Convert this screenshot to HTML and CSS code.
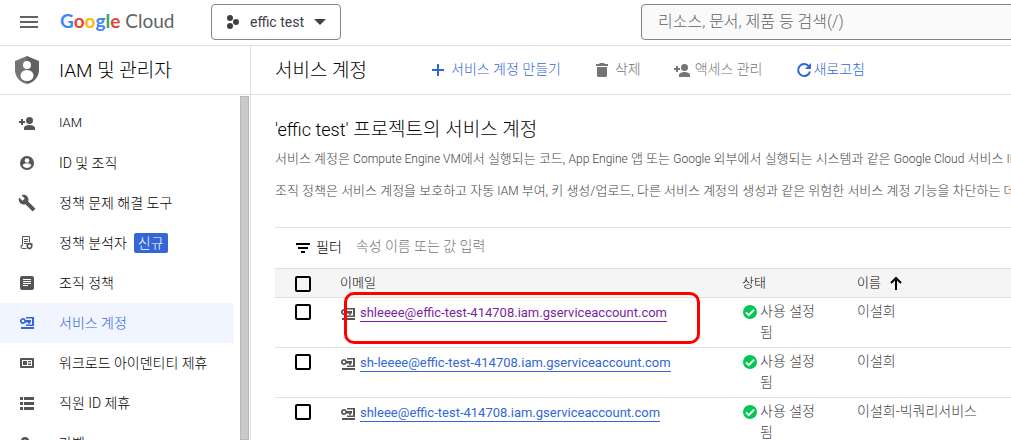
FILE: index.html
```html
<!DOCTYPE html>
<html lang="ko">
<head>
  <meta charset="UTF-8">
  <meta name="viewport" content="width=device-width, initial-scale=1.0">
  <title>서비스 계정</title>
  <link rel="stylesheet" href="styles.css">
</head>
<body>
  <!-- Shared icons -->
  <svg class="sprite" aria-hidden="true">
    <symbol id="person-add" viewBox="0 0 18 18">
      <path d="M3 5h2v2h2v2H5v2H3V9H1V7h2zM6 16v-2c0-2 3-3 5.500-3s5.500 1 5.500 3v2z"/>
      <circle cx="11.500" cy="6.500" r="3.500"/>
    </symbol>
    <symbol id="key-card" viewBox="0 0 14 12">
      <path fill-rule="evenodd" d="M3 1a3 3 0 0 1 2.800 2H11v2.500H9.800V7H8.200V5.500H5.600A3 3 0 1 1 3 1zm0 1.700a1.300 1.300 0 1 0 0 2.600 1.300 1.300 0 0 0 0-2.600z"/>
      <path d="M6 0h8v9H6V7.400h6V1.600H6zM1 10h13v2H1z"/>
    </symbol>
    <symbol id="check" viewBox="0 0 14 14">
      <circle cx="7" cy="7" r="7" fill="#00c853"/>
      <path d="M3 7.400l2.700 2.700L11 4.700" fill="none" stroke="#fff" stroke-width="2"/>
    </symbol>
  </svg>

  <header class="topbar">
    <button class="icon-button" aria-label="탐색 메뉴">
      <svg width="24" height="24" viewBox="0 0 24 24"><path d="M3 6h18v2H3zm0 5h18v2H3zm0 5h18v2H3z"/></svg>
    </button>
    <a class="logo" href="#"><span class="google"><span class="blue">G</span><span class="red">o</span><span class="yellow">o</span><span class="blue">g</span><span class="green">l</span><span class="red">e</span></span> <span>Cloud</span></a>
    <button class="project">
      <svg width="14" height="16" viewBox="0 0 14 16"><circle cx="4" cy="4" r="3"/><circle cx="10" cy="8" r="3"/><circle cx="4" cy="12" r="3"/></svg>
      <span>effic test</span>
      <svg width="12" height="6" viewBox="0 0 12 6"><path d="M0 0h12L6 6z"/></svg>
    </button>
    <input class="search" type="text" aria-label="검색" placeholder="리소스, 문서, 제품 등 검색(/)">
  </header>

  <div class="layout">
    <aside class="sidebar">
      <div class="product">
        <svg width="24" height="28" viewBox="0 0 24 28">
          <path fill="#757575" d="M12 0L0 5v9c0 7 5 12.500 12 14z"/>
          <path fill="#616161" d="M12 0l12 5v9c0 7-5 12.500-12 14z"/>
          <circle cx="12" cy="9" r="4" fill="#fff"/>
          <ellipse cx="12" cy="19.500" rx="6.500" ry="5.500" fill="#fff"/>
        </svg>
        <h2>IAM 및 관리자</h2>
      </div>
      <div class="menu">
        <nav>
          <a href="#" class="latin"><svg width="18" height="18"><use href="#person-add"/></svg>IAM</a>
          <a href="#"><svg width="18" height="18" viewBox="0 0 18 18"><circle cx="9" cy="9" r="7"/><circle cx="9" cy="6.500" r="2.300" fill="#fff"/><path fill="#fff" d="M4.700 11.500c0-1.300 2.300-2.200 4.300-2.200s4.300.9 4.300 2.200C12.500 13 11 14 9 14s-3.500-1-4.300-2.500z"/></svg>ID 및 조직</a>
          <a href="#"><svg width="18" height="18" viewBox="0 0 24 24"><path d="M22.700 19l-9.100-9.100c.9-2.300.4-5-1.500-6.900-2-2-5-2.400-7.400-1.300L9 6 6 9 1.600 4.700C.4 7.100.9 10.100 2.900 12.100c1.900 1.900 4.600 2.400 6.900 1.500l9.100 9.100c.4.400 1 .4 1.400 0l2.300-2.300c.5-.4.5-1.100.1-1.400z"/></svg>정책 문제 해결 도구</a>
          <a href="#"><svg width="18" height="18" viewBox="0 0 18 18"><path fill="none" stroke="#555" d="M8.500 14.500H4.500a1.500 1.500 0 0 1-1.500-1.500v-1.500h1.500V2.500h7V8M6 5.500h4M6 7.500h4M6 9.500h3"/><path d="M11.500 8.500l3 1v3c0 1.500-1.300 2.500-3 3-1.700-.5-3-1.500-3-3v-3z"/><circle cx="11.500" cy="12" r="1.500" fill="#fff"/></svg>정책 분석자<span class="badge">신규</span></a>
          <a href="#"><svg width="18" height="18" viewBox="0 0 18 18"><rect x="2" y="2" width="14" height="14" rx="2"/><path stroke="#fff" d="M5 5.500h8M5 7.500h8M5 9.500h8M5 11.500h5"/></svg>조직 정책</a>
          <a href="#" class="active"><svg width="18" height="14" viewBox="-2 -1 18 14"><use href="#key-card" width="14" height="12"/></svg>서비스 계정</a>
          <a href="#"><svg width="18" height="18" viewBox="0 0 18 18"><rect x="2" y="4" width="14" height="10" rx="1"/><path fill="#fff" d="M4 6h10v6H4z"/><path d="M5 7h4v4H5zM10 7h3v1.300h-3zm0 2.500h3V11h-3z"/></svg>워크로드 아이덴티티 제휴</a>
          <a href="#"><svg width="18" height="18" viewBox="0 0 18 18"><path d="M2 3h3v3H2zm4 0h10v3H6zM2 8h3v3H2zm4 0h10v3H6zm-4 5h3v3H2zm4 0h10v3H6z"/></svg>직원 ID 제휴</a>
          <a href="#"><svg width="18" height="18" viewBox="0 0 18 18"><path d="M3 7a4 4 0 0 1 8 0l5 4-5 5-8-5z"/><circle cx="7" cy="7" r="1.500" fill="#fff"/></svg>라벨</a>
        </nav>
        <div class="scrollbar"></div>
      </div>
    </aside>

    <main>
      <div class="toolbar">
        <h1>서비스 계정</h1>
        <button class="create"><svg width="12" height="12" viewBox="0 0 12 12"><path d="M5 0h2v5h5v2H7v5H5V7H0V5h5z"/></svg>서비스 계정 만들기</button>
        <button class="delete" disabled><svg width="12" height="14" viewBox="0 0 12 14"><path d="M4 0h4l1 1h3v2H0V1h3zM1 4h10v8.500c0 .8-.7 1.500-1.500 1.500h-7C1.700 14 1 13.300 1 12.500z"/></svg>삭제</button>
        <button class="access" disabled><svg width="18" height="18"><use href="#person-add"/></svg>액세스 관리</button>
        <button class="refresh"><svg width="16" height="16" viewBox="0 0 16 16"><path fill="none" stroke="#3367d6" stroke-width="2" d="M13 4.500A6 6 0 1 0 14 9.500"/><path d="M15 1v6H9z"/></svg>새로고침</button>
      </div>

      <section class="content">
        <h2><span>'effic test'</span> 프로젝트의 서비스 계정</h2>
        <p>서비스 계정은 <span>Compute Engine VM</span>에서 실행되는 코드, <span>App Engine</span> 앱 또는 <span>Google</span> 외부에서 실행되는 시스템과 같은 <span>Google Cloud</span> 서비스 <span>ID</span>를 나타냅니다.</p>
        <p>조직 정책은 서비스 계정을 보호하고 자동 <span>IAM</span> 부여, 키 생성/업로드, 다른 서비스 계정의 생성과 같은 위험한 서비스 계정 기능을 차단하는 데 사용할 수 있습니다.</p>

        <div class="filter">
          <svg width="14" height="10" viewBox="0 0 14 10"><path d="M0 0h14v2H0zm2 4h10v2H2zm3 4h4v2H5z"/></svg>
          <label for="filter">필터</label>
          <input id="filter" type="text" placeholder="속성 이름 또는 값 입력">
        </div>

        <table>
          <thead>
            <tr>
              <th class="select"><input type="checkbox" aria-label="모두 선택"></th>
              <th class="email">이메일</th>
              <th class="status">상태</th>
              <th>이름 <svg width="12" height="14" viewBox="0 0 12 14"><path fill="none" stroke="#000" stroke-width="2" d="M6 14V2M1 7l5-5 5 5"/></svg></th>
            </tr>
          </thead>
          <tbody>
            <tr>
              <td class="select"><input type="checkbox" aria-label="shleeee 선택"></td>
              <td class="email"><div class="account"><svg width="14" height="12"><use href="#key-card"/></svg><a class="visited" href="#">shleeee@effic-test-414708.iam.gserviceaccount.com</a></div><div class="highlight"></div></td>
              <td class="status"><div class="state"><svg width="14" height="14"><use href="#check"/></svg><span>사용 설정됨</span></div></td>
              <td>이설희</td>
            </tr>
            <tr>
              <td class="select"><input type="checkbox" aria-label="sh-leeee 선택"></td>
              <td class="email"><div class="account"><svg width="14" height="12"><use href="#key-card"/></svg><a href="#">sh-leeee@effic-test-414708.iam.gserviceaccount.com</a></div></td>
              <td class="status"><div class="state"><svg width="14" height="14"><use href="#check"/></svg><span>사용 설정됨</span></div></td>
              <td>이설희</td>
            </tr>
            <tr>
              <td class="select"><input type="checkbox" aria-label="shleee 선택"></td>
              <td class="email"><div class="account"><svg width="14" height="12"><use href="#key-card"/></svg><a href="#">shleee@effic-test-414708.iam.gserviceaccount.com</a></div></td>
              <td class="status"><div class="state"><svg width="14" height="14"><use href="#check"/></svg><span>사용 설정됨</span></div></td>
              <td>이설희-빅쿼리서비스</td>
            </tr>
          </tbody>
        </table>
      </section>
    </main>
  </div>
</body>
</html>
```
FILE: styles.css
```css
* {
  box-sizing: border-box;
}
body {
  display: flex;
  flex-direction: column;
  height: 100vh;
  margin: 0;
  overflow: hidden;
  background: #fff;
  color: #000;
  font-family: Roboto, "Noto Sans CJK KR", sans-serif;
  font-size: 14px;
  font-weight: 400;
}
h1, h2 {
  margin: 0;
  font-size: 19px;
  font-weight: 300;
  white-space: nowrap;
}
p {
  margin: 0;
}
svg {
  flex: none;
  fill: currentColor;
}
button {
  padding: 0;
  border: none;
  background: none;
  color: inherit;
  font: inherit;
  cursor: pointer;
}
.sprite {
  display: none;
}

/* Top bar */
.topbar {
  display: flex;
  flex: none;
  align-items: center;
  height: 46px;
  padding-left: 17px;
  padding-bottom: 2px;
  border-bottom: 1px solid #e0e0e0;
}
.icon-button {
  display: flex;
  margin-right: 19px;
  color: #5f6368;
}
.logo {
  width: 151px;
  padding-bottom: 2px;
  color: #5f6368;
  font-family: Lato, sans-serif;
  font-size: 19px;
  text-decoration: none;
  white-space: nowrap;
}
.google {
  font-weight: 700;
}
.blue { color: #4285f4; }
.red { color: #ea4335; }
.yellow { color: #fbbc04; }
.green { color: #34a853; }
.project {
  display: flex;
  flex: none;
  align-items: center;
  gap: 10px;
  width: 130px;
  height: 36px;
  padding-left: 14px;
  border: 1px solid #80868b;
  border-radius: 4px;
  color: #3c4043;
}
.search {
  flex: 1;
  height: 36px;
  margin-left: 300px;
  margin-right: -8px;
  padding: 0 16px;
  border: 1px solid #80868b;
  border-radius: 4px;
  background: #fafafa;
  font: inherit;
  font-size: 16px;
  font-weight: 300;
}
.search::placeholder {
  color: #5f6368;
}

.layout {
  display: flex;
  flex: 1;
  min-height: 0;
}

/* Sidebar */
.sidebar {
  display: flex;
  flex: none;
  flex-direction: column;
  width: 251px;
  border-right: 1px solid #e0e0e0;
}
.product {
  display: flex;
  flex: none;
  align-items: center;
  gap: 20px;
  height: 49px;
  padding-left: 15px;
  border-bottom: 1px solid #e0e0e0;
}
.product h2 {
  padding-bottom: 4px;
}
.menu {
  display: flex;
  flex: 1;
  justify-content: space-between;
  min-height: 0;
}
nav {
  width: 234px;
  padding-top: 8px;
}
nav a {
  display: flex;
  align-items: center;
  height: 40px;
  padding-bottom: 2px;
  padding-left: 18px;
  color: #000;
  font-weight: 300;
  text-decoration: none;
  white-space: nowrap;
}
nav svg {
  margin-top: 2px;
  margin-right: 23px;
  color: #555;
}
nav .latin {
  font-size: 13px;
}
nav .active {
  background: #f0f5ff;
  color: #3367d6;
}
nav .active svg {
  color: #3367d6;
}
.badge {
  margin-top: 2px;
  margin-left: 7px;
  padding: 0 4px;
  border-radius: 2px;
  background: #3367d6;
  color: #fff;
  line-height: 20px;
}
.scrollbar {
  width: 9px;
  margin: 1px 1px 0 0;
  border: 1px solid #b8b8b8;
  background: #cacaca;
}

/* Main */
main {
  flex: 1;
  min-width: 0;
  overflow: hidden;
}
.toolbar {
  display: flex;
  align-items: center;
  height: 49px;
  padding-bottom: 4px;
  padding-left: 24px;
  border-bottom: 1px solid #e0e0e0;
  color: #3367d6;
}
.toolbar h1 {
  color: #000;
}
.toolbar button {
  display: flex;
  align-items: center;
  gap: 7px;
  font-weight: 300;
  white-space: nowrap;
}
.toolbar svg {
  margin-top: 4px;
}
.toolbar button:disabled {
  color: #757575;
}
.toolbar .create {
  margin-left: 65px;
}
.toolbar .delete {
  margin-left: 35px;
}
.toolbar .access {
  gap: 4px;
  margin-left: 32px;
}
.toolbar .refresh {
  gap: 1px;
  margin-left: 34px;
}
.content {
  padding: 22px 0 0 24px;
}
.content h2 {
  line-height: 26px;
}
.content h2 span {
  font-size: 18px;
}
.content p {
  color: #444;
  font-size: 13px;
  font-weight: 300;
  line-height: 32px;
  white-space: nowrap;
}
.content p span {
  font-size: 12px;
}
.filter {
  display: flex;
  align-items: center;
  height: 41px;
  margin-top: 20px;
  padding-bottom: 4px;
  padding-left: 21px;
  border-top: 1px solid #e0e0e0;
}
.filter svg {
  margin-top: 4px;
}
.filter label {
  margin-left: 6px;
  font-weight: 300;
}
.filter input {
  flex: 1;
  margin-left: 12px;
  padding: 0 2px;
  border: none;
  font: inherit;
  font-weight: 300;
}
.filter input::placeholder {
  color: #757575;
}

/* Accounts table */
table {
  width: 100%;
  border-collapse: separate;
  border-spacing: 0;
  table-layout: fixed;
  line-height: 21px;
}
th {
  height: 30px;
  padding: 0 0 2px;
  border-top: 1px solid #e0e0e0;
  border-bottom: 1px solid #e0e0e0;
  background: #f5f5f5;
  font-size: 13px;
  font-weight: 300;
  text-align: left;
}
th svg {
  margin-left: 6px;
  vertical-align: middle;
}
td {
  height: 50px;
  padding: 3px 0;
  border-bottom: 1px solid #e0e0e0;
  color: #444;
  font-weight: 300;
  vertical-align: top;
}
.select {
  width: 65px;
  padding-left: 20px;
}
.email {
  position: relative;
  width: 402px;
}
.status {
  width: 115px;
}
input[type="checkbox"] {
  display: block;
  width: 16px;
  height: 16px;
  margin: 3px 0;
  border: 2px solid #000;
  border-radius: 2px;
  appearance: none;
}
th input[type="checkbox"] {
  margin-bottom: 0;
}
.account {
  display: flex;
  align-items: center;
  gap: 5px;
  padding: 4px 0 0 1px;
}
.account svg {
  color: #555;
}
.account a {
  border-bottom: 1px solid #3367d6;
  color: #3367d6;
  font-size: 13px;
  font-weight: 400;
  line-height: 16px;
  text-decoration: none;
}
.account .visited {
  border-color: #7b1fa2;
  color: #7b1fa2;
}
.state {
  display: flex;
  gap: 3px;
  width: 76px;
  padding-left: 1px;
}
.state svg {
  margin-top: 4px;
}
.highlight {
  position: absolute;
  top: -6px;
  left: 4px;
  width: 356px;
  height: 52px;
  border: 3px solid #f00;
  border-radius: 10px;
}
```
